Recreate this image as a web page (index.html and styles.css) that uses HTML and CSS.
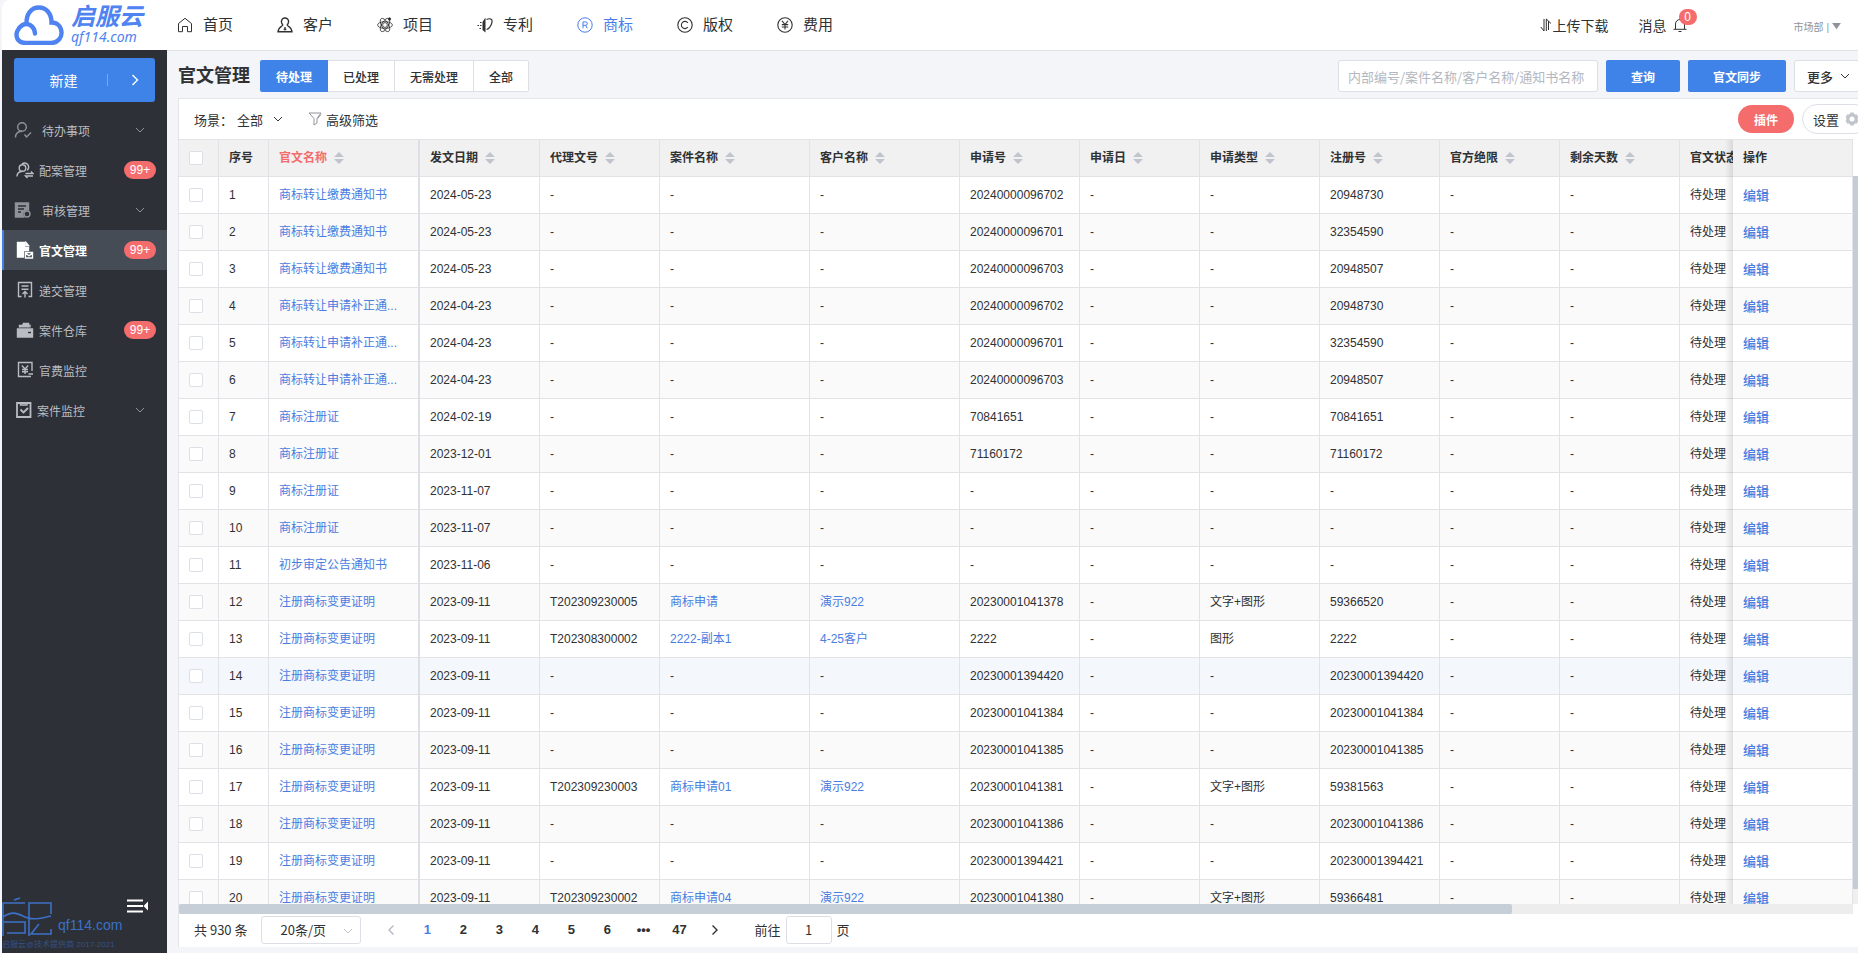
FILE: index.html
```html
<!DOCTYPE html>
<html lang="zh-CN">
<head>
<meta charset="utf-8">
<title>官文管理</title>
<link rel="stylesheet" href="styles.css">
</head>
<body>
<div class="app">
  <header class="topbar">
    <a class="logo" href="#">
      <svg class="logo-cloud" viewBox="0 0 50 40" fill="none" stroke="#4f83f1" stroke-width="4.4" stroke-linecap="round"><path d="M21 28.500C20.500 21 14 17 8.500 20C3.500 23 1 29 3.500 34Q6 38 12 38H37C44 38 48 32.500 47.500 27C47 21 43 17.500 37.500 17.500C37.500 8 32 2.500 25 2.500C17 2.500 12.500 9 12.500 17.500"/></svg>
      <span class="logo-text"><span class="logo-name">启服云</span><span class="logo-site">qf114.com</span></span>
    </a>
    <nav class="topnav">
      <a href="#"><svg viewBox="0 0 16 16"><path d="M1.500 6.500L8 1.300l6.500 5.200v8.200h-4V9.500h-5v5.200h-4z"/></svg>首页</a>
      <a href="#"><svg viewBox="0 0 16 16" stroke-width="1.4"><path d="M8 1a3.600 3.600 0 0 0-3.600 3.600c0 1.800 1 2.600 1.400 3.400.3.900-4.300 1.600-4.800 6.800h14c-.5-5.200-5.100-5.900-4.800-6.800.4-.8 1.400-1.600 1.400-3.400A3.600 3.600 0 0 0 8 1zM8 10v3M6.700 12.500h2.600"/></svg>客户</a>
      <a href="#"><svg viewBox="0 0 16 16" stroke-width=".8"><circle cx="8" cy="8" r="2.400"/><ellipse cx="8" cy="8" rx="7.400" ry="3.400"/><ellipse cx="8" cy="8" rx="7.400" ry="3.400" transform="rotate(60 8 8)"/><ellipse cx="8" cy="8" rx="7.400" ry="3.400" transform="rotate(120 8 8)"/><circle cx="12.500" cy="2" r="1.200" fill="currentColor"/></svg>项目</a>
      <a href="#"><svg viewBox="0 0 16 16" stroke-width="1.200"><path d="M8.500 .5L5.500 5V13l3 2.500z" fill="currentColor" stroke="none"/><path d="M9.500 2.500c5-2 6.500.5 5 4.500-1.200 3-3 5-5 5.500M.5 8.500h1.500M3 5.500h1.500M3 8.500h1.500M2.500 11.500h1.500"/></svg>专利</a>
      <a href="#" class="current"><svg viewBox="0 0 16 16" stroke-width="1"><circle cx="8" cy="8" r="7.200"/><path d="M6 11.300V4.900h2.600a1.600 1.600 0 0 1 0 3.400H6m2.600 0L10.300 11.300"/></svg>商标</a>
      <a href="#"><svg viewBox="0 0 16 16" stroke-width="1.100"><circle cx="8" cy="8" r="7.200"/><path d="M10.800 5.800a3.600 3.600 0 1 0 0 4.400"/></svg>版权</a>
      <a href="#"><svg viewBox="0 0 16 16" stroke-width="1.100"><circle cx="8" cy="8" r="7.200"/><path d="M5 3.800l3 3.700 3-3.700M8 7.500v5M4.800 7.600h6.400M4.800 10h6.400"/></svg>费用</a>
    </nav>
    <div class="topright">
      <a class="transfer" href="#"><svg viewBox="0 0 12 14"><path d="M4 1v12L.8 9M6.300 13V1L11 5.500M8.500 3.200V12"/></svg>上传下载</a>
      <a class="messages" href="#">消息 <span class="bell"><svg viewBox="0 0 14 16"><path d="M2.500 12V7a4.500 4.500 0 0 1 9 0v5M.5 12.300h13M5.500 14.500h3M7 1v1.500"/></svg><span class="count">0</span></span></a>
      <button class="dept" type="button">市场部 | <svg viewBox="0 0 10 8"><path d="M0 0h10L5 7z"/></svg></button>
    </div>
  </header>

  <aside class="sidebar">
    <button class="create" type="button"><span class="create-label">新建</span><span class="create-more"><svg viewBox="0 0 8 12"><path d="M1.500 1l5 5-5 5"/></svg></span></button>
    <nav class="menu">
      <a class="wide dim" href="#"><svg viewBox="0 0 18 18"><circle cx="8" cy="6" r="4.300"/><path d="M1.500 16.500c0-4.500 2.500-6 6.500-6.200M10.500 13.500l2 2.500 4.500-4.500"/></svg>待办事项<svg class="arrow" viewBox="0 0 10 6"><path d="M1 1l4 4 4-4"/></svg></a>
      <a href="#"><svg viewBox="0 0 18 18"><circle cx="6.500" cy="7" r="3.300"/><path d="M1 15.500c0-3.500 2-5 5.500-5.200M6 3a4 4 0 0 1 6.500 4c-.3 1.200-1 1.800-1 2.500M9.500 12.500h7.500l-2-2M17 15h-7.500l2 2"/></svg>配案管理<span class="pill">99+</span></a>
      <a class="wide dim" href="#"><svg viewBox="0 0 18 18"><path d="M1.500 2h13v7a4.500 4.500 0 0 0-5 7h-8z" fill="currentColor"/><path d="M4 5h8M4 8h6M4 11h3" stroke="#2d3037"/><circle cx="13" cy="13" r="3"/></svg>审核管理<svg class="arrow" viewBox="0 0 10 6"><path d="M1 1l4 4 4-4"/></svg></a>
      <a class="active" href="#"><svg viewBox="0 0 18 18"><path d="M1.500 1.500H8.500V6.500h4V9.500H7.500v6.500h-6zM10 1.500L12.500 4.500H10z" fill="currentColor"/><path d="M9.500 11.500h7V17h-7zM9.500 12l3.500 2.800L16.500 12"/></svg>官文管理<span class="pill">99+</span></a>
      <a href="#"><svg viewBox="0 0 18 18"><path d="M5.500 15.500h-3v-14h13v14h-3M5.500 5h7M5.500 8.200h7M9 16.500v-6M6.500 13L9 10.500l2.500 2.500"/></svg>递交管理</a>
      <a href="#"><svg viewBox="0 0 18 18"><path d="M1.500 8h15v8h-15zM3.500 6.500v-2h3l1-2h5v4M14 3.500v3" fill="currentColor"/><path d="M12 11.500h3" stroke="#2d3037"/></svg>案件仓库<span class="pill">99+</span></a>
      <a href="#"><svg viewBox="0 0 18 18"><path d="M16 10V1.500H2.500v14H15M12.500 13h4.500M5.800 4.500L9 8l3.200-3.500M9 8v5M6 8.500h6M6 10.800h6"/></svg>官费监控</a>
      <a class="monitor" href="#"><svg viewBox="0 0 18 18"><path d="M2 2h13.500v14H2zM5.500 8.500l3 3 4.500-4.500" stroke-width="1.800"/><path d="M5.500 1v3h6.500V1"/></svg>案件监控<svg class="arrow" viewBox="0 0 10 6"><path d="M1 1l4 4 4-4"/></svg></a>
    </nav>
    <div class="sidefoot">
      <button class="collapse" type="button" aria-label="收起菜单"><svg viewBox="0 0 22 14"><path d="M0 1.500h16M0 7h16M0 12.500h16" stroke="#fff" stroke-width="2"/><path d="M21 2.500v9L16.500 7z" fill="#fff"/></svg></button>
      <div class="brand"><svg viewBox="0 0 50 40"><path d="M12 3l6-2M1 39V6h22M1 20c10-7 15-3 22 0s14 2 26-1M2 25h21v11H5M27 39V6h22v11M27 25v-7M37 27L29 37h20v-5"/></svg><span>qf114.com</span></div>
      <small>启服云@技术提供商 2017-2021</small>
    </div>
  </aside>

  <main class="content">
    <div class="pagehead">
      <h1>官文管理</h1>
      <div class="tabs">
        <button class="on" type="button">待处理</button><button type="button">已处理</button><button type="button">无需处理</button><button type="button">全部</button>
      </div>
      <div class="search">
        <input type="text" aria-label="搜索" placeholder="内部编号/案件名称/客户名称/通知书名称">
        <button class="primary" type="button">查询</button>
        <button class="primary sync" type="button">官文同步</button>
        <button class="more" type="button">更多<svg viewBox="0 0 10 6"><path d="M1 1l4 4 4-4"/></svg></button>
      </div>
    </div>

    <section class="card">
      <div class="toolbar">
        <span>场景：</span>
        <button class="scene" type="button">全部<svg viewBox="0 0 10 6"><path d="M1 1l4 4 4-4"/></svg></button>
        <button class="filter" type="button"><svg viewBox="0 0 14 14"><path d="M1 1h12L9 6.500V11l-3 2V6.500zM9.500 6.500L13 2.500"/></svg>高级筛选</button>
        <div class="tools">
          <button class="plugin" type="button">插件</button>
          <button class="setting" type="button">设置<svg viewBox="0 0 16 16"><path d="M8 1.500v13M2.400 4.800l11.200 6.400M2.400 11.200l11.200-6.400" stroke-width="3.500"/><circle cx="8" cy="8" r="4.300" stroke-width="3"/><circle cx="8" cy="8" r="2.500" fill="#fff" stroke="none"/></svg></button>
        </div>
      </div>
      <div class="grid">
        <div class="viewport">
          <table>
            <colgroup><col class="w40"><col class="w50"><col class="w151"><col class="w120"><col class="w120"><col class="w150"><col class="w150"><col class="w120"><col class="w120"><col class="w120"><col class="w120"><col class="w120"><col class="w120"><col class="w120"><col class="w120"></colgroup>
            <thead><tr id="head"></tr></thead>
            <tbody id="rows"></tbody>
          </table>
        </div>
        <div class="vbar"><div class="vthumb"></div></div>
        <div class="hbar"><div class="hthumb"></div></div>
      </div>
      <div class="pager">
        <span>共 930 条</span>
        <span class="sizebox"><select aria-label="每页条数"><option>20条/页</option></select><svg viewBox="0 0 10 6"><path d="M1 1l4 4 4-4"/></svg></span>
        <div class="pages">
          <button class="prev" type="button" aria-label="上一页"><svg viewBox="0 0 8 12"><path d="M6.500 1.500L2 6l4.500 4.500"/></svg></button>
          <button class="cur" type="button">1</button><button type="button">2</button><button type="button">3</button><button type="button">4</button><button type="button">5</button><button type="button">6</button><button type="button">•••</button><button type="button">47</button>
          <button type="button" aria-label="下一页"><svg viewBox="0 0 8 12"><path d="M1.500 1.500L6 6l-4.500 4.500"/></svg></button>
        </div>
        <label class="jump">前往<input type="text" value="1">页</label>
      </div>
    </section>
  </main>
</div>
<script src="table.js"></script>
</body>
</html>
```
FILE: table.js
```js
const sort = '<svg class="sort" viewBox="0 0 10 12"><path d="M0 5L5 0l5 5zM0 7h10l-5 5z"/></svg>';
const titles = ['官文名称', '发文日期', '代理文号', '案件名称', '客户名称', '申请号', '申请日', '申请类型', '注册号', '官方绝限', '剩余天数', '官文状态'];
document.getElementById('head').innerHTML =
  '<th><input type="checkbox" aria-label="全选"></th><th>序号</th>' +
  titles.map((t, i) => `<th class="${i === 0 ? 'name' : ''}">${t}${i < 11 ? sort : ''}</th>`).join('') +
  '<th class="op">操作</th>';

const transfer = '商标转让缴费通知书', fix = '商标转让申请补正通...', cert = '商标注册证', change = '注册商标变更证明';
// name, date, agency number, case, client, application number, type, registration number
const data = [
  [transfer, '2024-05-23', '-', '-', '-', '20240000096702', '-', '20948730'],
  [transfer, '2024-05-23', '-', '-', '-', '20240000096701', '-', '32354590'],
  [transfer, '2024-05-23', '-', '-', '-', '20240000096703', '-', '20948507'],
  [fix, '2024-04-23', '-', '-', '-', '20240000096702', '-', '20948730'],
  [fix, '2024-04-23', '-', '-', '-', '20240000096701', '-', '32354590'],
  [fix, '2024-04-23', '-', '-', '-', '20240000096703', '-', '20948507'],
  [cert, '2024-02-19', '-', '-', '-', '70841651', '-', '70841651'],
  [cert, '2023-12-01', '-', '-', '-', '71160172', '-', '71160172'],
  [cert, '2023-11-07', '-', '-', '-', '-', '-', '-'],
  [cert, '2023-11-07', '-', '-', '-', '-', '-', '-'],
  ['初步审定公告通知书', '2023-11-06', '-', '-', '-', '-', '-', '-'],
  [change, '2023-09-11', 'T202309230005', '商标申请', '演示922', '20230001041378', '文字+图形', '59366520'],
  [change, '2023-09-11', 'T202308300002', '2222-副本1', '4-25客户', '2222', '图形', '2222'],
  [change, '2023-09-11', '-', '-', '-', '20230001394420', '-', '20230001394420'],
  [change, '2023-09-11', '-', '-', '-', '20230001041384', '-', '20230001041384'],
  [change, '2023-09-11', '-', '-', '-', '20230001041385', '-', '20230001041385'],
  [change, '2023-09-11', 'T202309230003', '商标申请01', '演示922', '20230001041381', '文字+图形', '59381563'],
  [change, '2023-09-11', '-', '-', '-', '20230001041386', '-', '20230001041386'],
  [change, '2023-09-11', '-', '-', '-', '20230001394421', '-', '20230001394421'],
  [change, '2023-09-11', 'T202309230002', '商标申请04', '演示922', '20230001041380', '文字+图形', '59366481']
];
const link = t => t === '-' ? '-' : `<a href="#">${t}</a>`;
document.getElementById('rows').innerHTML = data.map((r, i) => `<tr class="${i === 13 ? 'hover' : ''}">
  <td><input type="checkbox" aria-label="选择第${i + 1}行"></td><td>${i + 1}</td><td class="name">${link(r[0])}</td>
  <td>${r[1]}</td><td>${r[2]}</td><td>${link(r[3])}</td><td>${link(r[4])}</td><td>${r[5]}</td><td>-</td>
  <td>${r[6]}</td><td>${r[7]}</td><td>-</td><td>-</td><td>待处理</td><td class="op"><a href="#">编辑</a></td></tr>`).join('');
```
FILE: styles.css
```css
* { box-sizing: border-box; }
body {
  margin: 0;
  background: #f3f5f9;
  color: #303133;
  font-family: "Liberation Sans", "Noto Sans CJK SC", sans-serif;
  font-size: 12px;
}
a { color: inherit; text-decoration: none; }
button, input, select { font: inherit; color: inherit; }
button { border: 0; padding: 0; background: none; cursor: pointer; }
svg { fill: none; stroke: currentColor; flex: none; }

.app {
  display: grid;
  grid-template: 50px minmax(0, 1fr) / 165px minmax(0, 1fr);
  height: 100vh;
  padding-left: 2px;
  overflow: hidden;
}

/* top bar */
.topbar {
  grid-column: 1 / 3;
  display: flex;
  align-items: center;
  background: #fff;
  box-shadow: 0 1px 0 #dfe1e5;
  border-top-left-radius: 8px;
}
.logo {
  display: flex;
  align-items: center;
  gap: 7px;
  width: 175px;
  padding-left: 12px;
  color: #4f83f1;
}
.logo-cloud { width: 50px; height: 40px; }
.logo-text { display: flex; flex-direction: column; font-style: italic; }
.logo-name { font-size: 24px; line-height: 24px; font-weight: 700; }
.logo-site { font-family: "Noto Sans", sans-serif; font-size: 14px; line-height: 16px; }
.topnav { display: flex; font-size: 15px; }
.topnav a { display: flex; align-items: center; gap: 10px; width: 100px; line-height: 22px; }
.topnav svg { width: 16px; height: 16px; }
.topnav .current { color: #4a7de8; }
.topright { margin-left: auto; display: flex; align-items: center; font-size: 14px; padding-right: 17px; }
.transfer { display: flex; align-items: center; gap: 1px; margin-right: 30px; }
.transfer svg { width: 12px; height: 14px; }
.messages { display: flex; align-items: center; gap: 6px; margin-right: 107px; }
.bell { position: relative; display: flex; }
.bell svg { width: 14px; height: 16px; }
.count {
  position: absolute;
  left: 6px;
  top: -8px;
  width: 18px;
  height: 16px;
  border-radius: 8px;
  background: #f56c6c;
  color: #fff;
  font-size: 12px;
  line-height: 16px;
  text-align: center;
}
.dept { display: flex; align-items: center; gap: 3px; font-size: 10px; color: #909399; padding-top: 2px; }
.dept svg { width: 9px; height: 7px; fill: #909399; stroke: none; }

/* sidebar */
.sidebar { display: flex; flex-direction: column; background: #2d3037; color: #b9bcc2; }
.create {
  display: flex;
  align-items: center;
  height: 44px;
  margin: 8px 12px;
  border-radius: 3px;
  background: #3f83e8;
  color: #fff;
  font-size: 14px;
}
.create-label { flex: 1; padding-left: 6px; }
.create-more { display: flex; justify-content: center; width: 48px; height: 12px; padding-left: 7px; border-left: 1px solid #78a8ef; }
.create-more svg { width: 8px; height: 12px; stroke-width: 1.4; }
.menu a {
  display: flex;
  align-items: center;
  gap: 5px;
  height: 40px;
  padding: 0 11px 0 12px;
  border-left: 2px solid transparent;
}
.menu svg { width: 18px; height: 18px; stroke-width: 1.4; }
.menu .wide { padding-left: 10px; gap: 10px; }
.menu .monitor { padding-left: 11px; gap: 4px; }
.menu .dim > svg:first-child { opacity: .7; }
.menu .active { background: #454c55; border-left-color: #3f83e8; color: #fff; font-weight: 700; }
.menu .arrow { width: 10px; height: 6px; margin-left: auto; margin-right: 11px; stroke-width: 1; opacity: .7; }
.pill {
  margin-left: auto;
  width: 32px;
  height: 18px;
  border-radius: 9px;
  background: #f56c6c;
  color: #fff;
  font-size: 12px;
  font-weight: 400;
  line-height: 18px;
  text-align: center;
}
.sidefoot { margin-top: auto; color: #3c70c6; }
.collapse { display: flex; margin: 0 18px 0 auto; }
.collapse svg { width: 22px; height: 14px; stroke: none; }
.brand { display: flex; align-items: flex-end; gap: 6px; height: 24px; font-size: 14px; line-height: 24px; }
.brand svg { width: 50px; height: 40px; stroke-width: 1.6; }
.sidefoot small { display: block; font-size: 8px; line-height: 16px; color: #345184; white-space: nowrap; }

/* page heading */
.content { display: flex; flex-direction: column; min-width: 0; padding: 10px 0 6px 11px; }
.pagehead { display: flex; align-items: center; height: 32px; margin-bottom: 6px; }
h1 { margin: 0 10px 0 0; font-size: 18px; line-height: 26px; white-space: nowrap; }
.tabs { display: flex; }
.tabs button {
  height: 32px;
  padding: 0 15px;
  border: 1px solid #dcdfe6;
  border-left-width: 0;
  background: #fff;
  font-weight: 500;
}
.tabs button:last-child { border-radius: 0 2px 2px 0; }
.tabs .on { padding: 0 16px; border: 0; border-radius: 2px 0 0 2px; background: #3f83e8; color: #fff; font-weight: 700; }
.search { display: flex; gap: 8px; margin-left: auto; margin-right: -16px; }
.search input {
  width: 260px;
  height: 32px;
  padding: 0 9px;
  border: 1px solid #dcdfe6;
  border-radius: 3px;
  background: #fff;
  font-family: "Noto Sans CJK SC", sans-serif;
  font-size: 13px;
}
.search input::placeholder { color: #b4b8c0; opacity: 1; }
.primary { width: 74px; border-radius: 2px; background: #3f83e8; color: #fff; font-weight: 700; }
.sync { width: 98px; }
.more { display: flex; align-items: center; gap: 7px; width: 80px; padding-left: 12px; border: 1px solid #dcdfe6; border-radius: 3px; background: #fff; font-size: 13px; font-weight: 500; }
.more svg, .scene svg { width: 10px; height: 6px; }

/* card */
.card {
  flex: 1;
  display: flex;
  flex-direction: column;
  min-height: 0;
  background: #fff;
  border-top: 1px solid #e3e5e8;
  border-left: 1px solid #e3e5e8;
}
.toolbar { display: flex; align-items: center; height: 40px; flex: none; padding-left: 15px; font-size: 13px; }
.scene { display: flex; align-items: center; gap: 10px; margin-left: 4px; }
.filter { display: flex; align-items: center; gap: 4px; margin-left: 25px; }
.filter svg { width: 14px; height: 14px; color: #909399; }
.tools { display: flex; align-items: center; gap: 8px; margin-left: auto; margin-right: -12px; }
.plugin { width: 56px; height: 28px; border-radius: 14px; background: #f56c6c; color: #fff; font-size: 12px; font-weight: 700; }
.setting { display: flex; align-items: center; gap: 5px; width: 68px; height: 30px; padding-left: 10px; border: 1px solid #dcdfe6; border-radius: 15px; }
.setting svg { width: 16px; height: 16px; color: #c0c4cc; }

.grid { flex: 1; min-height: 0; display: grid; grid-template: minmax(0, 1fr) 10px / minmax(0, 1fr) 5px; }
.viewport { overflow: hidden; }
table { width: 1741px; table-layout: fixed; border-collapse: separate; border-spacing: 0; }
.w40 { width: 40px; }
.w50 { width: 50px; }
.w120 { width: 120px; }
.w150 { width: 150px; }
.w151 { width: 151px; }
th, td {
  height: 37px;
  padding: 0 10px;
  border-right: 1px solid #e1e3e6;
  border-bottom: 1px solid #e1e3e6;
  text-align: left;
  line-height: 18px;
  white-space: nowrap;
  overflow: hidden;
}
th { height: 38px; border-top: 1px solid #e1e3e6; background: #f1f1f1; font-weight: 700; }
td { background: #fff; }
tbody tr:nth-child(even) td { background: #fafafa; }
tbody tr.hover td { background: #f4f7fc; }
td a { color: #4a7de0; }
th.name { color: #f56c6c; }
.name { border-right: 2px solid #dcdfe3; }
.sort { width: 10px; height: 12px; margin-left: 7px; vertical-align: -2px; fill: #c0c4cc; stroke: none; }
.op {
  position: sticky;
  right: 0;
  overflow: visible;
}
.op::before {
  content: "";
  position: absolute;
  right: 100%;
  top: 0;
  bottom: -1px;
  width: 8px;
  background: linear-gradient(to left, rgba(0, 0, 0, .1), rgba(0, 0, 0, 0));
}
td.op { font-size: 13px; padding-top: 2px; }
td.op a { font-weight: 500; }
input[type=checkbox] {
  appearance: none;
  display: block;
  width: 14px;
  height: 14px;
  margin: 0;
  border: 1px solid #dcdfe6;
  border-radius: 2px;
  background: #fff;
}
.vbar { margin-top: 37px; padding-bottom: 15px; background: #efefef; }
.vthumb { height: 100%; background: #c4cdd7; }
.hbar { background: #ededed; }
.hthumb { width: 79.6%; height: 10px; border-radius: 2px; background: #c6cfd8; }

/* pagination */
.pager {
  display: flex;
  align-items: center;
  height: 33px;
  flex: none;
  padding: 0 0 2px 15px;
  font-family: "Noto Sans CJK SC", sans-serif;
  font-size: 13px;
}
.sizebox { position: relative; display: flex; margin-left: 14px; }
.sizebox select { appearance: none; width: 100px; height: 28px; padding: 0 18px; border: 1px solid #dcdfe6; border-radius: 3px; background: #fff; }
.sizebox svg { position: absolute; right: 8px; top: 12px; width: 10px; height: 6px; color: #c0c4cc; }
.pages { display: flex; margin-left: 12px; font-family: "Liberation Sans", sans-serif; }
.pages button { display: flex; align-items: center; justify-content: center; width: 36px; font-weight: 700; }
.pages svg { width: 8px; height: 12px; stroke-width: 1.4; }
.pages .prev { color: #b4b8c0; }
.pages .cur { color: #4a7de8; }
.jump { display: flex; align-items: center; gap: 5px; margin-left: 21px; }
.jump input { width: 46px; height: 28px; border: 1px solid #dcdfe6; border-radius: 3px; text-align: center; }
```
